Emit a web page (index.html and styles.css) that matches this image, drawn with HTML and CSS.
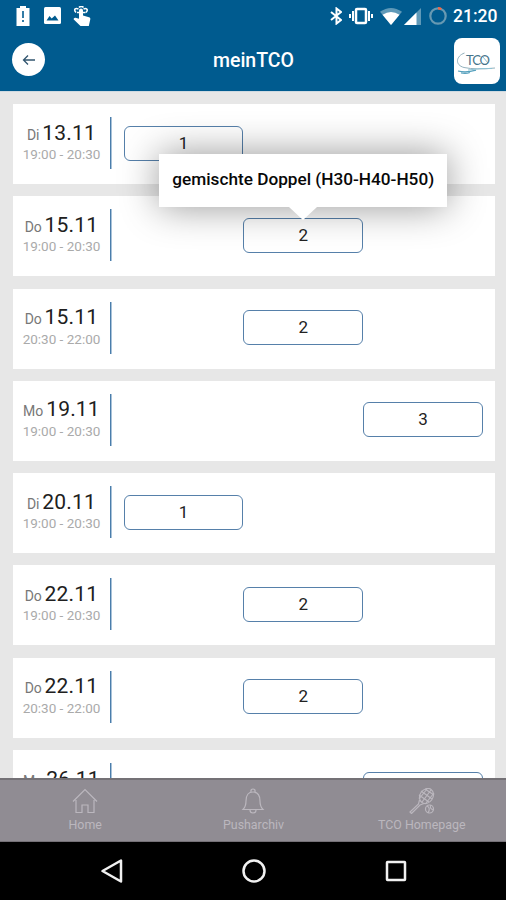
FILE: index.html
```html
<!DOCTYPE html>
<html lang="de">
<head>
<meta charset="utf-8">
<title>meinTCO</title>
<link rel="stylesheet" href="styles.css">
</head>
<body>
<div class="app">
  <header class="header">
    <div class="status">
      <div class="status-left">
        <svg width="14" height="20" viewBox="0 0 14 20"><path fill="#fff" d="M4 0h6v2h3.5v18H.5V2H4z"/><path fill="#005b8f" d="M6.2 5h1.6v7H6.2zM6.2 14h1.6v2H6.2z"/></svg>
        <svg width="17" height="17" viewBox="0 0 17 17"><rect width="17" height="17" rx="1.5" fill="#fff"/><path fill="#005b8f" d="M2.500 13.500 5.500 9l2.200 2.500L11 8.500l3.500 5z"/></svg>
        <svg width="18" height="20" viewBox="0 0 18 20"><path fill="#fff" d="M6 4.500a2 2 0 0 1 4 0v5l6 1.800c1 .4 1.500 1 1.300 2L15.800 20H7.500L.8 13.400c-.6-.7.4-2 1.700-1.700l3.500 1z"/><path fill="none" stroke="#fff" stroke-width="1.500" d="M3 6.500C0 3 3 1.500 5.500 3.200M13 6.500c3-3 0-5-2.500-3.300M6 1.500C7 0 9.500 0 10.500 1.500M4 6.500h8.500"/></svg>
      </div>
      <div class="status-right">
        <svg class="bluetooth" width="12" height="18" viewBox="0 0 12 18"><path fill="none" stroke="#fff" stroke-width="2" d="m1 5 10 8-4.500 3.500v-15L11 5l-10 8"/></svg>
        <svg class="vibrate" width="24" height="18" viewBox="0 0 24 18"><rect x="7" y="2" width="10" height="14" rx="1" fill="none" stroke="#fff" stroke-width="2.500"/><path stroke="#fff" stroke-width="2" d="M4 4v10M20 4v10M1 7v4M23 7v4"/></svg>
        <svg class="wifi" width="22" height="18" viewBox="0 0 22 18"><path fill="#5f99b8" d="M0 4.800Q11-3 22 4.800L11 18z"/><path fill="#fff" d="M2.500 7.800Q11 2 19.500 7.800L11 18z"/></svg>
        <svg class="signal" width="18" height="18" viewBox="0 0 18 18"><path fill="#5f99b8" d="M17 1v17H0z"/><path fill="#fff" d="M12.500 5.500V18H0z"/></svg>
        <svg class="ring" width="20" height="20" viewBox="0 0 20 20"><circle cx="10" cy="10" r="7.700" fill="none" stroke="#6799b2" stroke-width="2.200"/><path fill="none" stroke="#ef6746" stroke-width="2.500" d="M10 2.300q2 0 3.200.9"/></svg>
        <span class="clock">21:20</span>
      </div>
    </div>
    <div class="toolbar">
      <div class="back"><svg width="14" height="12" viewBox="0 0 14 12"><path fill="none" stroke="#32556f" stroke-width="1.300" d="M13 6H1.500M6 1.500 1.500 6 6 10.500"/></svg></div>
      <h1>meinTCO</h1>
      <div class="logo"><svg width="46" height="46" viewBox="0 0 46 46"><path fill="none" stroke="#87a8b6" stroke-width=".9" d="M10.500 15C2 18 .5 27 10 29.500q12 2.500 31 .5"/><path fill="none" stroke="#55a0bd" stroke-width="1.200" d="M4 33q8 2 18-.8M7 35q5 1 9-.5"/><path fill="none" stroke="#8fc3d4" stroke-width="1" d="M14 32q12-2 24-1.500M29 19l5 6"/><text x="12" y="27" textLength="24">TCO</text></svg></div>
    </div>
  </header>
  <main class="list">
    <article class="card"><div class="when"><p class="date"><small>Di</small><span>13.11</span></p><p class="time">19:00 - 20:30</p></div><div class="slots"><span class="slot">1</span></div></article>
    <article class="card"><div class="when"><p class="date"><small>Do</small><span>15.11</span></p><p class="time">19:00 - 20:30</p></div><div class="slots"><span class="slot middle">2<span class="tooltip">gemischte Doppel (H30-H40-H50)</span></span></div></article>
    <article class="card"><div class="when"><p class="date"><small>Do</small><span>15.11</span></p><p class="time">20:30 - 22:00</p></div><div class="slots"><span class="slot middle">2</span></div></article>
    <article class="card"><div class="when"><p class="date"><small>Mo</small><span>19.11</span></p><p class="time">19:00 - 20:30</p></div><div class="slots"><span class="slot last">3</span></div></article>
    <article class="card"><div class="when"><p class="date"><small>Di</small><span>20.11</span></p><p class="time">19:00 - 20:30</p></div><div class="slots"><span class="slot">1</span></div></article>
    <article class="card"><div class="when"><p class="date"><small>Do</small><span>22.11</span></p><p class="time">19:00 - 20:30</p></div><div class="slots"><span class="slot middle">2</span></div></article>
    <article class="card"><div class="when"><p class="date"><small>Do</small><span>22.11</span></p><p class="time">20:30 - 22:00</p></div><div class="slots"><span class="slot middle">2</span></div></article>
    <article class="card"><div class="when"><p class="date"><small>Mo</small><span>26.11</span></p></div><div class="slots"><span class="slot last"></span></div></article>
  </main>
  <nav class="tabs">
    <div class="tab"><svg width="26" height="26" viewBox="0 0 26 26"><path d="M1 13.500 13 1.500l12 12M4 12v12.500h6V17h6v7.500h6V12"/></svg><span>Home</span></div>
    <div class="tab"><svg width="26" height="26" viewBox="0 0 26 26"><path d="M3 21.500q3-3 3-8.500c0-6 2.500-9 7-9s7 3 7 9q0 5.500 3 8.500zM11 4c-1-4 5-4 4 0M10 22c0 4 6 4 6 0"/></svg><span>Pusharchiv</span></div>
    <div class="tab"><svg width="26" height="26" viewBox="0 0 26 26"><ellipse cx="17.500" cy="8" rx="6.500" ry="8" transform="rotate(35 17.500 8)"/><path d="m12 3 11 8M10 7l10 7M16 1l9 6M22 2l-9 12M18 1l-8 10M25 5l-8 10M10.500 12l-1 4L1 24l1.500 1.500 8.500-8.500 4-1.500"/><circle cx="20.500" cy="21" r="4"/><path d="M18 18q4 2 1 7M22 17q-2 3 2 5"/></svg><span>TCO Homepage</span></div>
  </nav>
  <div class="system">
    <svg width="24" height="26" viewBox="0 0 24 26"><path d="M21 2.500v21L2.500 13z"/></svg>
    <svg width="26" height="26" viewBox="0 0 26 26"><circle cx="13" cy="13" r="10.500"/></svg>
    <svg width="24" height="26" viewBox="0 0 24 26"><rect x="3" y="4" width="18" height="18" rx=".5"/></svg>
  </div>
</div>
</body>
</html>
```

FILE: styles.css
```css
* { box-sizing: border-box; }
body { margin: 0; font-family: Roboto, sans-serif; background: #e7e7e7; }
p, h1 { margin: 0; }
svg { display: block; flex: none; }
.app { width: 506px; height: 900px; display: flex; flex-direction: column; overflow: hidden; }
.header { height: 91px; flex: none; background: #005b8f; color: #fff; }
.status { height: 32px; display: flex; justify-content: space-between; padding: 0 9px 0 16px; }
.status-left { display: flex; gap: 14px; align-items: center; padding-bottom: 1px; }
.status-left svg:last-child { margin-left: -2px; }
.status-right { display: flex; align-items: center; }
.bluetooth { margin-right: 1px; }
.vibrate { margin-left: 6px; }
.wifi { margin-left: 7px; }
.signal { margin-left: 2px; }
.ring { margin-left: 6px; }
.clock { margin-left: 5px; font-size: 17.5px; font-weight: 500; line-height: 32px; width: 44px; white-space: nowrap; }
.toolbar { height: 59px; display: grid; grid-template-columns: 46px 1fr 46px; align-items: center; padding: 0 6px 3px 12px; }
.back { width: 33px; height: 33px; margin-top: -1px; border-radius: 50%; background: #fff; display: flex; align-items: center; justify-content: center; }
.toolbar h1 { font-size: 19.5px; font-weight: 500; text-align: center; margin-right: 5px; padding-top: 1px; }
.logo { width: 46px; height: 46px; border-radius: 8px; background: #fff; margin-top: 1px; }
.logo text { font-family: Lato, sans-serif; font-size: 13px; fill: #47758b; }
.list { flex: 1; min-height: 0; overflow: hidden; padding: 12px 11px 0 13px; display: flex; flex-direction: column; gap: 12.3px; border-top: 1px solid #cfdae1; }
.card { height: 80px; flex: none; background: #fff; display: flex; align-items: flex-start; padding: 13px 12px 0 0; }
.when { width: 98px; height: 52px; flex: none; border-right: 1px solid #4a7dab; box-shadow: 1px 0 0 #a9c2d8; text-align: center; white-space: nowrap; }
.date { display: flex; justify-content: center; align-items: baseline; gap: 3px; font-size: 21px; line-height: 24px; padding-top: 3.5px; color: #202020; letter-spacing: .2px; }
.date small { font-size: 14px; color: #777; letter-spacing: -.1px; }
.time { font-size: 13.5px; line-height: 18px; margin-top: -1.5px; color: #aaa; }
.slots { flex: 1; display: grid; grid-template-columns: repeat(3, 1fr); padding: 8.5px 0 0 12.5px; }
.slot { height: 35px; border: 1.5px solid #5680aa; border-radius: 6px; font-size: 17px; line-height: 33px; text-align: center; color: #222; position: relative; }
.middle { grid-column: 2; }
.last { grid-column: 3; }
.tooltip { position: absolute; left: 50%; bottom: 44.5px; width: 288px; height: 53px; transform: translateX(-50%); background: #fff; color: #080808; font-size: 17.2px; font-weight: 500; line-height: 50px; white-space: nowrap; box-shadow: 0 0 38px rgba(0,0,0,.42); z-index: 1; }
.tooltip::after { content: ""; position: absolute; left: 50%; top: 100%; margin-left: -14px; border: 14px solid transparent; border-top: 13px solid #fff; border-bottom: 0; }
.tabs { height: 64px; flex: none; display: grid; grid-template-columns: repeat(3, 1fr); background: #908c93; border-top: 2px solid #747176; border-bottom: 1px solid #757177; padding-left: 1px; position: relative; z-index: 2; }
.tab { display: flex; flex-direction: column; align-items: center; padding-top: 8px; color: #bbb7be; font-size: 12.4px; line-height: 22px; }
.tab svg { fill: none; stroke: #bbb7be; stroke-width: 1.2; }
.system { height: 58px; flex: none; background: #000; display: flex; justify-content: space-between; align-items: center; padding: 0 98px 0 100px; }
.system svg { fill: none; stroke: #f1f1f1; stroke-width: 2.5; stroke-linejoin: round; }
```
